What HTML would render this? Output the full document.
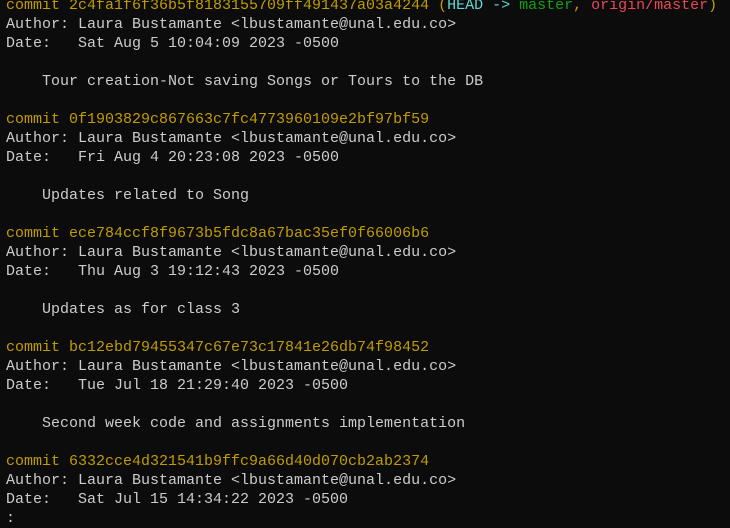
<!DOCTYPE html>
<html><head><style>
html,body{margin:0;padding:0;background:#0c0c0c;width:730px;height:528px;overflow:hidden}
pre{margin:0;position:absolute;left:6px;top:-4px;font-family:"Liberation Mono",monospace;font-size:15px;line-height:19px;color:#cccccc;letter-spacing:0}
.y{color:#c19c00}.c{color:#61d6d6}.g{color:#13a10e}.r{color:#e74856}
</style></head><body><pre><span class="y">commit 2c4fa1f6f36b5f8183155709ff491437a03a4244 (<span class="c">HEAD -&gt; </span><span class="g">master</span>, <span class="r">origin/master</span>)</span>
Author: Laura Bustamante &lt;lbustamante@unal.edu.co&gt;
Date:   Sat Aug 5 10:04:09 2023 -0500

    Tour creation-Not saving Songs or Tours to the DB

<span class="y">commit 0f1903829c867663c7fc4773960109e2bf97bf59</span>
Author: Laura Bustamante &lt;lbustamante@unal.edu.co&gt;
Date:   Fri Aug 4 20:23:08 2023 -0500

    Updates related to Song

<span class="y">commit ece784ccf8f9673b5fdc8a67bac35ef0f66006b6</span>
Author: Laura Bustamante &lt;lbustamante@unal.edu.co&gt;
Date:   Thu Aug 3 19:12:43 2023 -0500

    Updates as for class 3

<span class="y">commit bc12ebd79455347c67e73c17841e26db74f98452</span>
Author: Laura Bustamante &lt;lbustamante@unal.edu.co&gt;
Date:   Tue Jul 18 21:29:40 2023 -0500

    Second week code and assignments implementation

<span class="y">commit 6332cce4d321541b9ffc9a66d40d070cb2ab2374</span>
Author: Laura Bustamante &lt;lbustamante@unal.edu.co&gt;
Date:   Sat Jul 15 14:34:22 2023 -0500
:</pre></body></html>
